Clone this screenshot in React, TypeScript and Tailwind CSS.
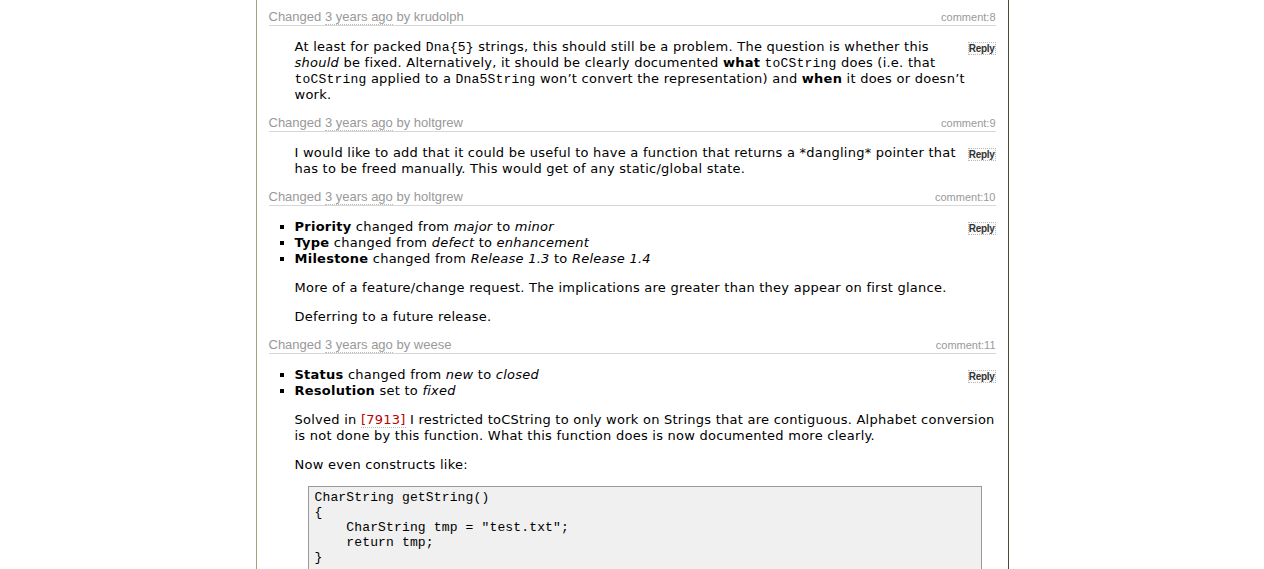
import type { ReactNode } from 'react';

function ChangeHeader({ author, num, first }: { author: string; num: number; first?: boolean }) {
  return (
    <div
      className={`flex items-baseline justify-between border-b border-[#d7d7d7] h-[17px] leading-[16px] font-['Liberation_Sans',Arial,sans-serif] text-[#999] ${first ? 'mt-[9px]' : 'mt-[12px]'}`}
    >
      <div className="text-[13px]">
        Changed <span className="border-b border-dotted border-[#bbb]">3 years ago</span> by {author}
      </div>
      <div className="text-[11px]">comment:{num}</div>
    </div>
  );
}

function ReplyButton() {
  return (
    <div className="float-right mt-[3px] ml-[6px] border border-dotted border-[#bbb] bg-[#fafafa] px-0 text-[10px] leading-[11px] font-bold text-[#333] font-['Liberation_Sans',Arial,sans-serif] tracking-[-0.3px]">
      Reply
    </div>
  );
}

function Body({ children }: { children: ReactNode }) {
  return (
    <div className="ml-[26px] mt-[13px] text-[13px] leading-[16px] tracking-[0.25px] text-black font-['DejaVu_Sans',Verdana,sans-serif] flow-root whitespace-nowrap">
      <ReplyButton />
      {children}
    </div>
  );
}

function Tt({ children }: { children: ReactNode }) {
  return <span className="font-['Liberation_Mono','Courier_New',monospace] text-[13px] leading-[12px] tracking-[0.2px]">{children}</span>;
}

function Changes({ items }: { items: ReactNode[] }) {
  return (
    <ul className="list-[square] list-outside">
      {items.map((it, i) => (
        <li key={i}>{it}</li>
      ))}
    </ul>
  );
}

export default function App() {
  return (
    <div className="min-h-screen bg-white">
      <div className="mx-auto w-[753px] h-[569px] overflow-hidden border-l border-r border-l-[#a3a283] border-r-[#4a4838] px-[12px]">
        <ChangeHeader author="krudolph" num={8} first />
        <Body>
          <p>
            At least for packed <Tt>Dna{'{5}'}</Tt> strings, this should still be a problem. The question is whether this
            <br />
            <em>should</em> be fixed. Alternatively, it should be clearly documented <strong>what</strong> <Tt>toCString</Tt> does (i.e. that
            <br />
            <Tt>toCString</Tt> applied to a <Tt>Dna5String</Tt> won’t convert the representation) and <strong>when</strong> it does or doesn’t
            <br />
            work.
          </p>
        </Body>

        <ChangeHeader author="holtgrew" num={9} />
        <Body>
          <p>
            I would like to add that it could be useful to have a function that returns a *dangling* pointer that
            <br />
            has to be freed manually. This would get of any static/global state.
          </p>
        </Body>

        <ChangeHeader author="holtgrew" num={10} />
        <Body>
          <Changes
            items={[
              <>
                <strong>Priority</strong> changed from <em>major</em> to <em>minor</em>
              </>,
              <>
                <strong>Type</strong> changed from <em>defect</em> to <em>enhancement</em>
              </>,
              <>
                <strong>Milestone</strong> changed from <em>Release 1.3</em> to <em>Release 1.4</em>
              </>,
            ]}
          />
          <p className="mt-[13px]">More of a feature/change request. The implications are greater than they appear on first glance.</p>
          <p className="mt-[13px]">Deferring to a future release.</p>
        </Body>

        <ChangeHeader author="weese" num={11} />
        <Body>
          <Changes
            items={[
              <>
                <strong>Status</strong> changed from <em>new</em> to <em>closed</em>
              </>,
              <>
                <strong>Resolution</strong> set to <em>fixed</em>
              </>,
            ]}
          />
          <p className="mt-[13px]">
            Solved in <span className="text-[#b00] border-b border-dotted border-[#bbb]">[7913]</span> I restricted toCString to only work on
            Strings that are contiguous. Alphabet conversion
            <br />
            is not done by this function. What this function does is now documented more clearly.
          </p>
          <p className="mt-[13px]">Now even constructs like:</p>
          <pre className="mt-[13px] ml-[13px] mr-[14px] border border-[#999] bg-[#f0f0f0] px-[6px] pt-[3px] pb-[10px] font-['Liberation_Mono','Courier_New',monospace] text-[13px] leading-[15px] tracking-[0.15px] text-black">
{`CharString getString()
{
    CharString tmp = "test.txt";
    return tmp;
}
`}
          </pre>
        </Body>
      </div>
    </div>
  );
}
